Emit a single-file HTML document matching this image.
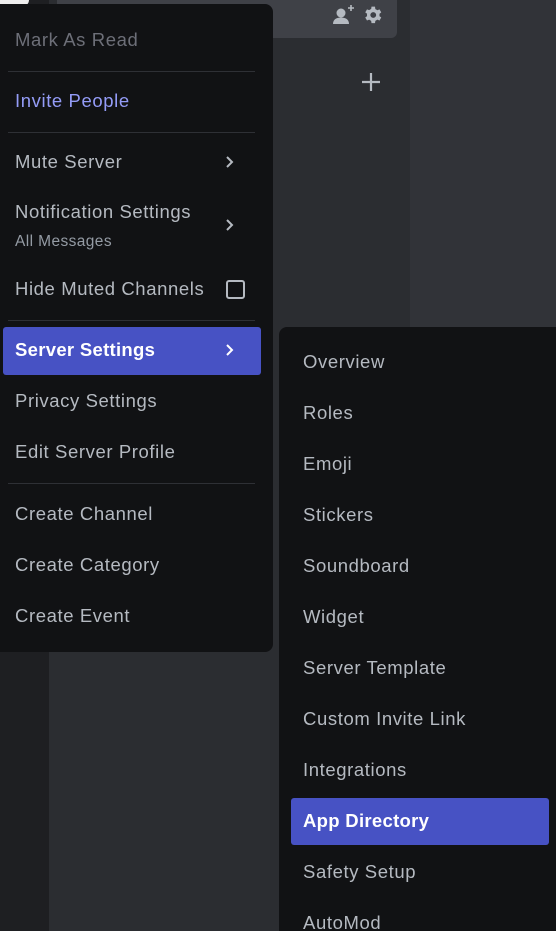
<!DOCTYPE html>
<html><head><meta charset="utf-8"><style>
*{margin:0;padding:0;box-sizing:border-box}
html,body{width:556px;height:931px;overflow:hidden}
body{background:#313338;position:relative;font-family:"Liberation Sans",sans-serif}
.abs{position:absolute}
.it{position:absolute;left:15px;font-size:18.5px;letter-spacing:0.6px;color:#b5bac1;line-height:22px;white-space:nowrap}
.sep{position:absolute;left:8px;width:247px;height:1px;background:#2e3035}
.sub{position:absolute;left:303px;font-size:18.5px;letter-spacing:0.6px;color:#b5bac1;line-height:22px;white-space:nowrap}
.chev{position:absolute;left:224px;width:12px;height:14px}
</style></head><body>
<div class="abs" style="left:0;top:0;width:49px;height:931px;background:#1e1f22"></div>
<div class="abs" style="left:0;top:0;width:29px;height:6px;background:#eee;border-radius:0 0 10px 0"></div>
<div class="abs" style="left:49px;top:0;width:361px;height:931px;background:#2b2d31"></div>
<div class="abs" style="left:57px;top:0;width:340px;height:38px;background:#3f4147;border-radius:0 0 6px 6px"></div>
<svg class="abs" style="left:331px;top:3px" width="26" height="24" viewBox="0 0 26 24"><circle cx="10" cy="10" r="4.5" fill="#b5bac1"/><path d="M2 21c0-5 4-6.5 8-6.5s8 1.5 8 6.5z" fill="#b5bac1"/><path d="M20 2v6M17 5h6" stroke="#b5bac1" stroke-width="1.6"/></svg>
<svg class="abs" style="left:363px;top:5px" width="20" height="20" viewBox="0 0 24 24"><path fill="#b5bac1" d="M19.7 13.4c.1-.5.1-.9.1-1.4s0-.9-.1-1.4l2.2-1.7-2.1-3.6-2.6 1c-.7-.6-1.5-1-2.4-1.4L14.4 2h-4.2l-.4 2.8c-.9.3-1.700.8-2.4 1.4l-2.6-1-2.1 3.6 2.2 1.7c-.1.5-.1.9-.1 1.4s0 .9.1 1.4L2.7 15l2.1 3.6 2.6-1c.7.6 1.5 1 2.4 1.4l.4 2.8h4.2l.4-2.8c.9-.3 1.7-.8 2.4-1.4l2.6 1 2.1-3.6zM12.3 15.5a3.5 3.5 0 1 1 0-7 3.5 3.5 0 0 1 0 7z"/></svg>
<svg class="abs" style="left:361px;top:72px" width="20" height="20"><path d="M10 1v18M1 10h18" stroke="#b5bac1" stroke-width="2.2"/></svg>

<div class="abs" style="left:-8px;top:4px;width:281px;height:648px;background:#111214;border-radius:8px"></div>
<div class="it" style="top:29px;color:#6d6f78">Mark As Read</div>
<div class="sep" style="top:71px"></div>
<div class="it" style="top:90px;color:#949cf7">Invite People</div>
<div class="sep" style="top:132px"></div>
<div class="it" style="top:151px">Mute Server</div>
<svg class="chev" style="top:155px" viewBox="0 0 12 14"><path d="M3 2l5 5-5 5" stroke="#b5bac1" stroke-width="2" fill="none"/></svg>
<div class="it" style="top:201px">Notification Settings</div>
<div class="it" style="top:231px;font-size:15.5px;color:#949ba4;letter-spacing:0.4px">All Messages</div>
<svg class="chev" style="top:218px" viewBox="0 0 12 14"><path d="M3 2l5 5-5 5" stroke="#b5bac1" stroke-width="2" fill="none"/></svg>
<div class="it" style="top:278px">Hide Muted Channels</div>
<div class="abs" style="left:226px;top:280px;width:19px;height:19px;border:2px solid #b5bac1;border-radius:3px"></div>
<div class="sep" style="top:320px"></div>
<div class="abs" style="left:3px;top:327px;width:258px;height:48px;background:#4752c4;border-radius:3px"></div>
<div class="it" style="top:339px;color:#fff;font-weight:bold;letter-spacing:0.3px">Server Settings</div>
<svg class="chev" style="top:343px" viewBox="0 0 12 14"><path d="M3 2l5 5-5 5" stroke="#fff" stroke-width="2" fill="none"/></svg>
<div class="it" style="top:390px">Privacy Settings</div>
<div class="it" style="top:441px">Edit Server Profile</div>
<div class="sep" style="top:483px"></div>
<div class="it" style="top:503px">Create Channel</div>
<div class="it" style="top:554px">Create Category</div>
<div class="it" style="top:605px">Create Event</div>

<div class="abs" style="left:279px;top:327px;width:290px;height:604px;background:#111214;border-radius:8px 8px 0 0"></div>
<div class="sub" style="top:351px">Overview</div>
<div class="sub" style="top:402px">Roles</div>
<div class="sub" style="top:453px">Emoji</div>
<div class="sub" style="top:504px">Stickers</div>
<div class="sub" style="top:555px">Soundboard</div>
<div class="sub" style="top:606px">Widget</div>
<div class="sub" style="top:657px">Server Template</div>
<div class="sub" style="top:708px">Custom Invite Link</div>
<div class="sub" style="top:759px">Integrations</div>
<div class="abs" style="left:291px;top:798px;width:258px;height:47px;background:#4752c4;border-radius:3px"></div>
<div class="sub" style="top:810px;color:#fff;font-weight:bold;letter-spacing:0.3px">App Directory</div>
<div class="sub" style="top:861px">Safety Setup</div>
<div class="sub" style="top:912px">AutoMod</div>
</body></html>
